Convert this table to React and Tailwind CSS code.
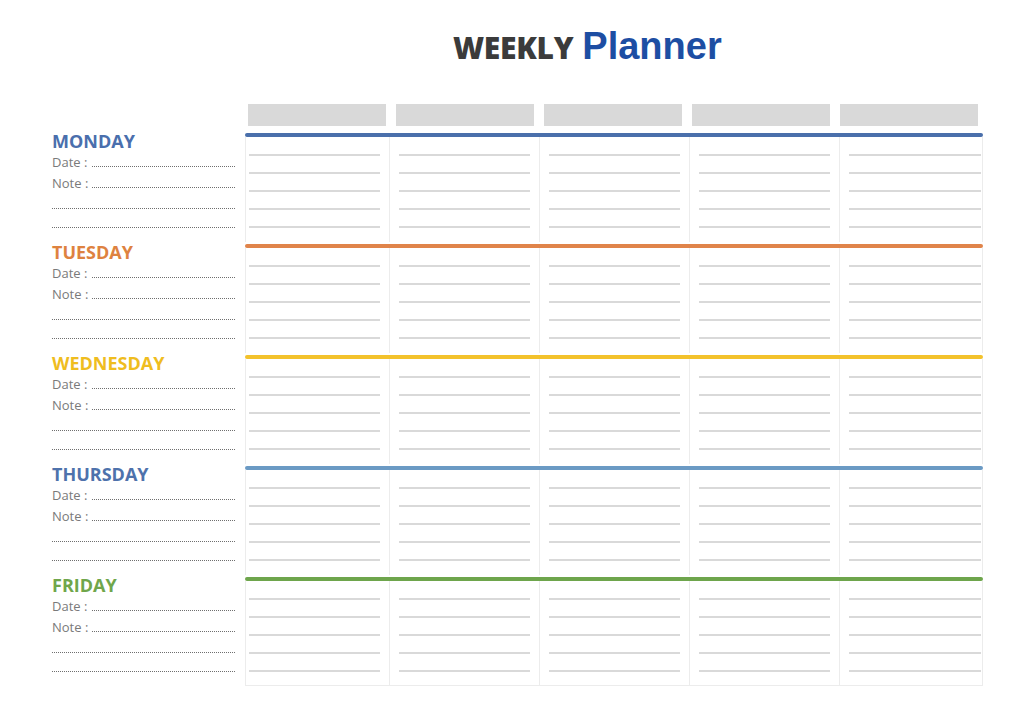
import React from 'react';

const days = [
    { name: 'MONDAY', text: 'text-[#4a6fad]', bar: 'bg-[#4a6fab]' },
    { name: 'TUESDAY', text: 'text-[#de8240]', bar: 'bg-[#e0844a]' },
    { name: 'WEDNESDAY', text: 'text-[#efbd1f]', bar: 'bg-[#f3c22c]' },
    { name: 'THURSDAY', text: 'text-[#4e72ac]', bar: 'bg-[#6b9ac4]' },
    { name: 'FRIDAY', text: 'text-[#70a64b]', bar: 'bg-[#6ea54c]' },
];

// padding per column so the lines sit like the printed sheet
const cols = [
    'pl-[3px] pr-[9px] border-r',
    'px-[9px] border-r',
    'px-[9px] border-r',
    'px-[9px] border-r',
    'pl-[9px] pr-[3px]',
];

function DaySection({ day, last }) {
    return (
        <div className="flex h-[111px]">
            <div className="w-[183px] ml-[52px] mr-[10px] flex flex-col">
                <div className={`h-[20px] leading-[20px] text-[18px] font-bold ${day.text}`}>{day.name}</div>
                <div className="mt-[3px] h-[16px] flex items-end text-[13px] leading-[16px] text-[#7a7a7a]">
                    <span>Date :</span>
                    <span className="flex-1 ml-[5px] mb-[3px] border-b border-dotted border-[#6f6f6f]"></span>
                </div>
                <div className="mt-[5px] h-[16px] flex items-end text-[13px] leading-[16px] text-[#7a7a7a]">
                    <span>Note :</span>
                    <span className="flex-1 ml-[4px] mb-[3px] border-b border-dotted border-[#6f6f6f]"></span>
                </div>
                <div className="mt-[17px] border-b border-dotted border-[#6f6f6f]"></div>
                <div className="mt-[18px] border-b border-dotted border-[#6f6f6f]"></div>
            </div>
            <div className="w-[738px] flex flex-col">
                <div className={`mt-[2px] h-[4px] rounded-full ${day.bar}`}></div>
                <div className={`flex-1 grid grid-cols-[144px_150px_150px_150px_144px] border-l border-r border-[#ececec] ${last ? 'border-b' : ''}`}>
                    {cols.map((c, i) => (
                        <div key={i} className={`flex flex-col gap-[16px] pt-[17px] border-[#ececec] ${c}`}>
                            {[0, 1, 2, 3, 4].map(n => (
                                <div key={n} className="h-[2px] bg-[#d9d9d9]"></div>
                            ))}
                        </div>
                    ))}
                </div>
            </div>
        </div>
    );
}

function App() {
    return (
        <div className="w-[1024px] h-[709px] bg-white overflow-hidden font-['Open_Sans',sans-serif]">
            <div className="pt-[27px] pl-[453px] h-[64px] flex items-baseline">
                <span className="text-[30px] leading-[38px] font-extrabold text-[#3b3b3b] tracking-[-0.01em]">WEEKLY</span>
                <span className="ml-[9px] text-[38px] leading-[38px] font-bold text-[#1d4ea3] font-['Liberation_Sans',Arial,sans-serif]">Planner</span>
            </div>
            <div className="mt-[40px] ml-[248px] flex gap-[10px]">
                {[0, 1, 2, 3, 4].map(i => (
                    <div key={i} className="w-[138px] h-[22px] bg-[#d9d9d9]"></div>
                ))}
            </div>
            <div className="mt-[5px]">
                {days.map((d, i) => (
                    <DaySection key={d.name} day={d} last={i === days.length - 1} />
                ))}
            </div>
        </div>
    );
}

export default App;
